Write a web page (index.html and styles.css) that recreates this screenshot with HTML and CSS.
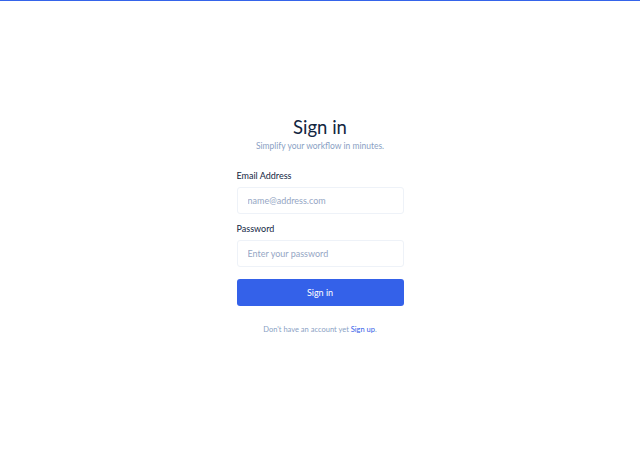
FILE: index.html
```html
<!DOCTYPE html>
<html lang="en">
<head>
<meta charset="utf-8">
<title>Sign in</title>
<link rel="stylesheet" href="styles.css">
</head>
<body>
<main class="page">
  <form class="card">
    <h1 class="title">Sign in</h1>
    <p class="subtitle">Simplify your workflow in minutes.</p>
    <div class="field">
      <label class="label">Email Address</label>
      <input class="input" type="email" placeholder="name@address.com">
    </div>
    <div class="field">
      <label class="label">Password</label>
      <input class="input" type="password" placeholder="Enter your password">
    </div>
    <button class="btn" type="button">Sign in</button>
    <p class="footer">Don't have an account yet <a class="link" href="#">Sign up</a>.</p>
  </form>
</main>
</body>
</html>
```
FILE: styles.css
```css
html, body {
  margin: 0;
  padding: 0;
  background: #ffffff;
}
body {
  border-top: 1px solid #3564ea;
  font-family: "Lato", "Open Sans", sans-serif;
  color: #12263f;
}
.page {
  display: flex;
  justify-content: center;
  padding-top: 115px;
}
.card {
  width: 167px;
  display: flex;
  flex-direction: column;
}
.title {
  margin: 0;
  font-size: 18.5px;
  font-weight: 400;
  line-height: 23px;
  text-align: center;
  color: #12263f;
}
.subtitle {
  margin: 0 0 15px;
  font-size: 8.5px;
  line-height: 15px;
  text-align: center;
  color: #8a9fc4;
}
.field {
  display: flex;
  flex-direction: column;
  margin-bottom: 8px;
}
.label {
  font-size: 9px;
  line-height: 14px;
  margin-bottom: 4px;
  color: #12263f;
}
.input {
  box-sizing: border-box;
  height: 27px;
  border: 1px solid #eef2f8;
  border-radius: 3px;
  padding: 0 10px;
  font-family: inherit;
  font-size: 9px;
  color: #12263f;
  background: #fff;
  outline: none;
}
.input::placeholder {
  color: #95a6c4;
}
.btn {
  height: 27px;
  margin-top: 4px;
  border: none;
  border-radius: 3px;
  background: #3461e9;
  color: #ffffff;
  font-family: inherit;
  font-size: 9px;
}
.footer {
  margin: 18px 0 0;
  font-size: 7.5px;
  line-height: 12px;
  text-align: center;
  color: #8a9fc4;
}
.link {
  color: #3461e9;
  text-decoration: none;
}
```
